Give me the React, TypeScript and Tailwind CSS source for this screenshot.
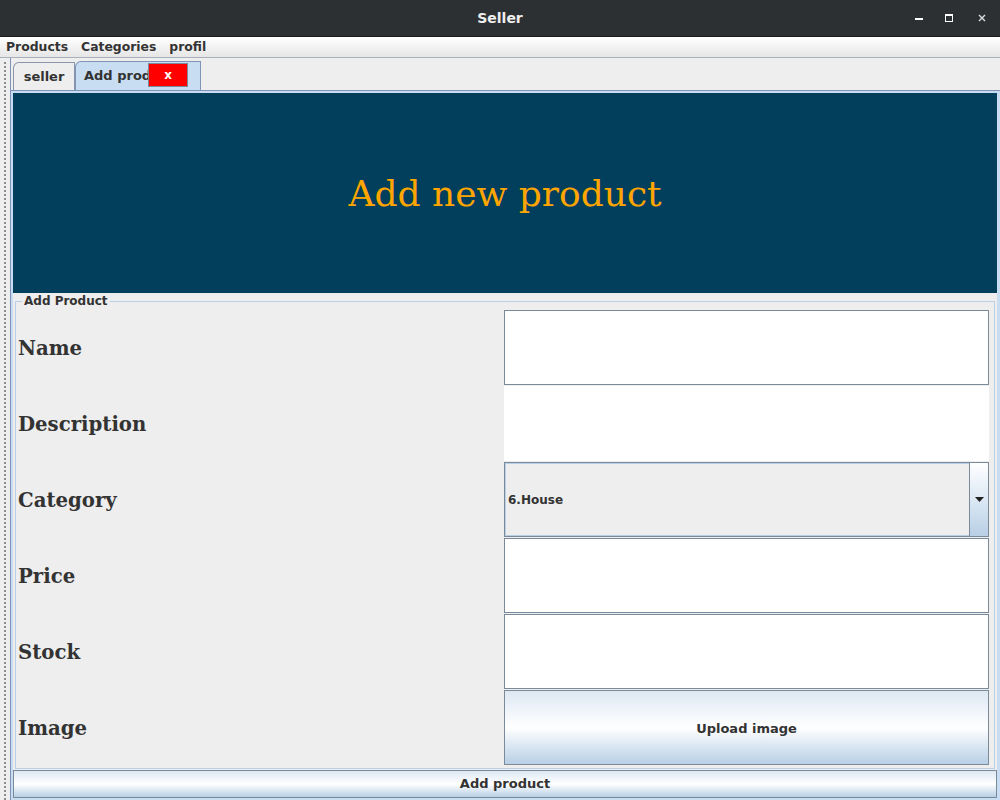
import React from "react";

const sans = "font-['DejaVu_Sans',sans-serif]";
const serif = "font-['DejaVu_Serif',serif]";

type FieldKind = "text" | "area" | "combo" | "upload";

const rows: { label: string; kind: FieldKind }[] = [
  { label: "Name", kind: "text" },
  { label: "Description", kind: "area" },
  { label: "Category", kind: "combo" },
  { label: "Price", kind: "text" },
  { label: "Stock", kind: "text" },
  { label: "Image", kind: "upload" },
];

function Field({ kind }: { kind: FieldKind }) {
  if (kind === "text") {
    return <div className="h-full bg-white border border-[#7a8a99]" />;
  }
  if (kind === "area") {
    return <div className="h-full bg-white" />;
  }
  if (kind === "combo") {
    return (
      <div className="h-full flex bg-[#eeeeee] border border-[#7a8a99]">
        <div className="flex-1 flex items-center pl-[2px] text-[12px] font-bold text-[#333333] border border-[#b8cfe5] border-r-0">
          6.House
        </div>
        <div className="w-[19px] flex items-center justify-center border-l border-[#7a8a99] bg-gradient-to-b from-[#ffffff] via-[#dce8f4] to-[#b8cfe5]">
          <svg width="9" height="5" viewBox="0 0 9 5">
            <path d="M0 0h9L4.5 5z" fill="#222" />
          </svg>
        </div>
      </div>
    );
  }
  return (
    <button className="w-full h-full flex items-center justify-center pt-[2px] border border-[#7a8a99] bg-gradient-to-b from-[#dde8f3] via-[#ffffff] to-[#b8cfe5] text-[13px] font-bold text-[#333333]">
      Upload image
    </button>
  );
}

export default function App() {
  return (
    <div className={`w-[1000px] h-[800px] flex flex-col overflow-hidden bg-[#eeeeee] ${sans}`}>
      {/* title bar */}
      <div className="relative h-[37px] shrink-0 flex items-center justify-center bg-[#2d3033] border-b border-[#1a1c1e]">
        <span className="text-[14px] font-bold text-[#eeeeee]">Seller</span>
        <div className="absolute right-0 top-0 h-full flex items-center">
          <div className="w-[30px] flex justify-center">
            <div className="w-[8px] h-[2px] bg-white mt-[1px]" />
          </div>
          <div className="w-[30px] flex justify-center">
            <div className="w-[8px] h-[8px] border border-white border-t-2" />
          </div>
          <div className="w-[36px] flex justify-center">
            <svg width="8" height="8" viewBox="0 0 8 8">
              <path d="M1 1l6 6M7 1l-6 6" stroke="#dddddd" strokeWidth="1.4" />
            </svg>
          </div>
        </div>
      </div>

      {/* menu bar */}
      <div className="h-[20px] shrink-0 flex items-center gap-[13px] pl-[6px] bg-gradient-to-b from-[#ffffff] to-[#e6e6e6] text-[12.4px] font-bold text-[#333333]">
        <span>Products</span>
        <span>Categories</span>
        <span>profil</span>
      </div>

      <div className="flex-1 flex border-t border-[#a8b0bc]">
        {/* dotted split strip */}
        <div className="w-[10px] shrink-0 flex justify-center pt-[3px] bg-[#eeeeee]">
          <div className="w-[2px] h-full bg-[radial-gradient(circle,#8a8a8a_0.7px,transparent_0.9px)] bg-[length:2px_4px]" />
        </div>

        <div className="flex-1 flex flex-col border-l border-[#7f93b8]">
          {/* tabs */}
          <div className="h-[32px] shrink-0 flex items-end pl-[2px] pt-[4px]">
            <div className="h-[28px] w-[62px] flex items-center justify-center border border-b-0 border-[#8a96a8] rounded-tl-[6px] bg-[#eeeeee] text-[13px] font-bold text-[#333333]">
              seller
            </div>
            <div className="relative h-[29px] w-[126px] flex items-center pl-[8px] border border-b-0 border-[#7f93b8] rounded-tl-[6px] bg-[#c8ddf2] text-[13px] font-bold text-[#333333]">
              <span className="-mt-[1px]">Add prod</span>
              <div className="absolute left-[72px] top-[1px] w-[40px] h-[24px] flex items-center justify-center bg-[#ff0000] border border-[#7a8a99] text-white text-[12px] font-bold">
                x
              </div>
            </div>
          </div>

          {/* tab content */}
          <div className="flex-1 flex flex-col border-t border-[#7f93b8] bg-[#c8ddf2] p-[2px] pt-[2px] pr-[3px]">
            <div className="flex-1 flex flex-col bg-[#eeeeee]">
              <div className="h-[200px] shrink-0 flex items-center justify-center bg-[#023f5c]">
                <span className={`${serif} text-[36px] text-[#ffa500] mt-[1px]`}>Add new product</span>
              </div>

              <fieldset className="flex-1 mx-[2px] mt-[1px] mb-[1px] border border-[#b8cfe5] pl-[2px] pr-[5px] pb-[1px] min-w-0">
                <legend className="ml-[4px] px-[2px] text-[12px] font-bold text-[#333333] leading-[14px]">
                  Add Product
                </legend>
                <div className="grid grid-cols-[486px_1fr] gap-y-[1px] mt-[2px]">
                  {rows.map((r) => (
                    <React.Fragment key={r.label}>
                      <div className={`h-[75px] flex items-center pt-[2px] ${serif} text-[19.7px] font-bold text-[#333333]`}>
                        {r.label}
                      </div>
                      <div className="h-[75px]">
                        <Field kind={r.kind} />
                      </div>
                    </React.Fragment>
                  ))}
                </div>
              </fieldset>

              <button className="h-[28px] shrink-0 border border-[#7a8a99] bg-gradient-to-b from-[#dde8f3] via-[#ffffff] to-[#b8cfe5] text-[13px] font-bold text-[#333333]">
                Add product
              </button>
            </div>
          </div>
        </div>
      </div>
    </div>
  );
}
